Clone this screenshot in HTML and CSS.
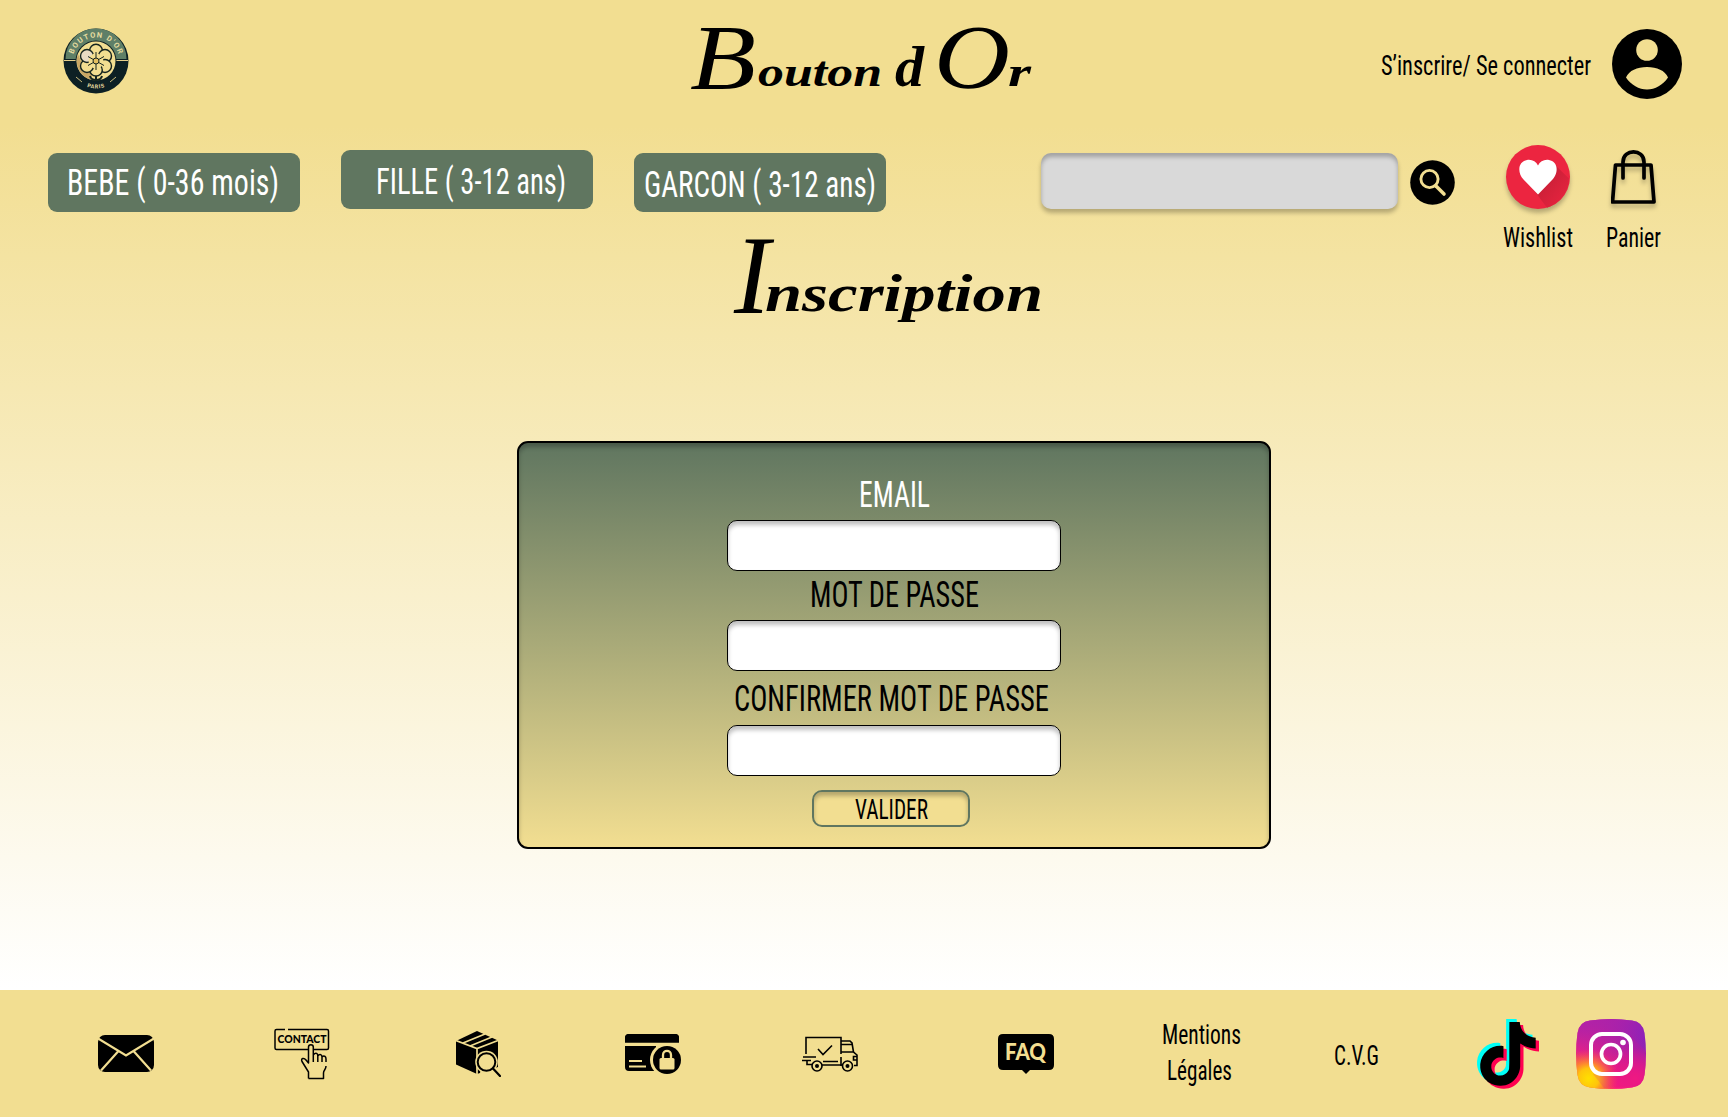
FILE: index.html
```html
<!DOCTYPE html>
<html lang="fr">
<head>
<meta charset="utf-8">
<title>Bouton d'Or - Inscription</title>
<link rel="stylesheet" href="styles.css">
</head>
<body>
<div class="page">
  <header class="top">
    <svg class="logo" width="66" height="66" viewBox="0 0 66 66">
      <defs>
        <path id="arc-top" d="M9.500 33A23.500 23.500 0 0 1 56.500 33"/>
        <path id="arc-bottom" d="M5.500 33A27.500 27.500 0 0 0 60.500 33"/>
      </defs>
      <circle cx="33" cy="33" r="32.500" fill="#0d2024"/>
      <path d="M2.500 31A30.500 30.500 0 0 1 63.500 31Z" fill="#5f7f67"/>
      <path d="M1 32.500H65" stroke="#e6cf8a" stroke-width="1"/>
      <circle cx="33" cy="33" r="20.500" fill="#0d2024"/>
      <circle cx="33" cy="33" r="19.500" fill="#f2de91"/>
      <path d="M15 26A19.500 19.500 0 0 0 27 51.500L30 46L20 38Z" fill="#c9a765"/>
      <g fill="#f2de91" stroke="#15241f" stroke-width="1.400">
        <ellipse cx="33" cy="23" rx="6.500" ry="6.800"/>
        <ellipse cx="42" cy="28" rx="6.500" ry="6.500"/>
        <ellipse cx="42" cy="38" rx="6.500" ry="6.500"/>
        <ellipse cx="33" cy="42" rx="6.300" ry="6"/>
        <ellipse cx="24" cy="38" rx="6.500" ry="6.500"/>
        <ellipse cx="24" cy="28" rx="6.500" ry="6.500" fill="#e9dcc3"/>
      </g>
      <circle cx="33" cy="33" r="7.500" fill="#f2de91"/>
      <path d="M33 24V42M25 28.500L41 37.500M25 37.500L41 28.500" stroke="#15241f" stroke-width="1"/>
      <circle cx="33" cy="33" r="3" fill="#e3bf60" stroke="#15241f"/>
      <path d="M33 48V53M33 52Q28 52 27 48M33 52Q38 52 39 48" fill="none" stroke="#15241f" stroke-width="2"/>
      <path d="M13 49L19 54M53 49L47 54" stroke="#cdbb7b" stroke-width="1"/>
      <text class="logo-text"><textPath href="#arc-top" startOffset="50%" textLength="60" lengthAdjust="spacing">BOUTON D'OR</textPath></text>
      <text class="logo-text small"><textPath href="#arc-bottom" startOffset="50%">PARIS</textPath></text>
    </svg>
    <svg class="brand script" width="345" height="80">
      <text class="cap" x="2" y="69" font-size="94" textLength="66" lengthAdjust="spacingAndGlyphs">B</text>
      <text x="70" y="66" font-size="43" textLength="124" lengthAdjust="spacingAndGlyphs">outon</text>
      <text x="207" y="66" font-size="56" textLength="29" lengthAdjust="spacingAndGlyphs">d</text>
      <text class="cap" x="246" y="68" font-size="91" textLength="76" lengthAdjust="spacingAndGlyphs">O</text>
      <text x="320" y="66" font-size="43" textLength="23" lengthAdjust="spacingAndGlyphs">r</text>
    </svg>
    <a class="account">
      <svg class="label" width="210" height="40"><text x="0" y="29" textLength="210" lengthAdjust="spacingAndGlyphs">S’inscrire/ Se connecter</text></svg>
      <svg width="70" height="70" viewBox="0 0 70 70"><circle cx="35" cy="35" r="35"/><circle class="cutout" cx="35" cy="21" r="10.800"/><path class="cutout" d="M14 48.500C17 41.500 25 38 35 38S53 41.500 56 48.500C51 56 43 60.500 35 60.500S19 56 14 48.500Z"/></svg>
    </a>
  </header>

  <nav class="bar">
    <a class="category"><svg class="label big" width="213" height="58"><text x="-1" y="41.500" textLength="212" lengthAdjust="spacingAndGlyphs">BEBE ( 0-36 mois)</text></svg></a>
    <a class="category raised"><svg class="label big" width="190" height="58"><text x="-1" y="43.500" textLength="190" lengthAdjust="spacingAndGlyphs">FILLE ( 3-12 ans)</text></svg></a>
    <a class="category"><svg class="label big" width="232" height="58"><text x="0" y="43.500" textLength="232" lengthAdjust="spacingAndGlyphs">GARCON ( 3-12 ans)</text></svg></a>
    <input class="search" type="text" aria-label="Recherche">
    <svg class="search-icon" width="45" height="45" viewBox="0 0 45 45"><circle cx="22.500" cy="22.500" r="22.300"/><g fill="none" stroke="#f2de91"><circle cx="19.500" cy="19" r="8.600" stroke-width="2.900"/><path d="M26 26L34 34" stroke-width="3.600" stroke-linecap="round"/></g></svg>
    <a class="shortcut wishlist">
      <svg class="shadowed" width="64" height="64" viewBox="0 0 64 64">
        <defs><linearGradient id="heart-shade" x1="0" y1="0" x2="1" y2="1"><stop offset=".3" stop-color="#c81f37"/><stop offset="1" stop-color="#ec2540"/></linearGradient></defs>
        <circle cx="32" cy="32" r="32" fill="#ec2540"/>
        <path d="M47 18L63 33.500A32 32 0 0 1 41 62.700L27 44Z" fill="url(#heart-shade)"/>
        <path fill="#fff" d="M32 49.500L17.500 34.500C11 27.500 12 16.500 21 15C26 14.200 30 16.500 32 20.500C34 16.500 38 14.200 43 15C52 16.500 53 27.500 46.500 34.500Z"/>
      </svg>
      <svg class="label" width="70" height="34"><text x="0" y="28" textLength="70" lengthAdjust="spacingAndGlyphs">Wishlist</text></svg>
    </a>
    <a class="shortcut cart">
      <svg class="shadowed" width="46" height="64" viewBox="0 0 46 64"><g fill="none" stroke="#000" stroke-width="3.700" stroke-linecap="round" stroke-linejoin="round"><path d="M4.500 20H40L43 57H1.500Z"/><path d="M12 33V17C12 3.500 33 3.500 33 17V33"/></g></svg>
      <svg class="label" width="55" height="34"><text x="0" y="28" textLength="55" lengthAdjust="spacingAndGlyphs">Panier</text></svg>
    </a>
  </nav>

  <main>
    <svg class="title script" width="312" height="122">
      <text class="cap" x="2" y="75" font-size="113" textLength="36" lengthAdjust="spacingAndGlyphs">I</text>
      <text x="33" y="73" font-size="52" textLength="278" lengthAdjust="spacingAndGlyphs">nscription</text>
    </svg>

    <form class="card">
      <label class="field">
        <svg class="label big light" width="71" height="40"><text x="0" y="30" textLength="71" lengthAdjust="spacingAndGlyphs">EMAIL</text></svg>
        <input type="email">
      </label>
      <label class="field second">
        <svg class="label big" width="169" height="40"><text x="0" y="30" textLength="169" lengthAdjust="spacingAndGlyphs">MOT DE PASSE</text></svg>
        <input type="password">
      </label>
      <label class="field third">
        <svg class="label big" width="315" height="40"><text x="0" y="29" textLength="315" lengthAdjust="spacingAndGlyphs">CONFIRMER MOT DE PASSE</text></svg>
        <input type="password">
      </label>
      <button class="submit" type="button"><svg class="label" width="73" height="32"><text x="0" y="26.500" textLength="73" lengthAdjust="spacingAndGlyphs">VALIDER</text></svg></button>
    </form>
  </main>

  <footer class="footer">
    <svg width="56" height="37" viewBox="0 0 56 37"><rect width="56" height="37" rx="7"/><g fill="none" stroke="#f2de91" stroke-width="2.200"><path d="M0 3.500L28 20.500L56 3.500M3 35.500L20.500 16M53 35.500L35.500 16"/></g></svg>
    <svg class="contact" width="56" height="52" viewBox="0 0 56 52">
      <path d="M11 1.500H2.500Q1 1.500 1 3V20Q1 21.500 2.500 21.500H34M40 21.500H53Q54.500 21.500 54.500 20V3Q54.500 1.500 53 1.500H14" fill="none" stroke="#000" stroke-width="1.500"/>
      <text x="3.500" y="15.300" textLength="49" lengthAdjust="spacingAndGlyphs">CONTACT</text>
      <path class="hand" d="M34.500 50.500V44L28 33.500C26.500 30 30 29.500 32 32L34.500 35V19C34.500 16 39.300 16 39.300 19V34M39.300 27C42 23.500 44 26 43.800 28V34M43.800 28C46 25 48 27 48 29V34M48 29C50.500 26.500 52 29 52 31V34M52 38C52 42 49.500 42 49.500 45V50.500H34.500" stroke="#000" stroke-width="1.500" stroke-linejoin="round"/>
    </svg>
    <svg class="box" width="45" height="46" viewBox="0 0 45 46"><path d="M0 10L21 0L42 9.500V36L21 43L0 33.500Z"/><g fill="none" stroke="#f2de91" stroke-width="1.700"><path d="M0 9.500L21 17.500L42 9.500M21 17.500V43M7 12L29 3M14 15L36 6"/></g><circle cx="30.500" cy="31" r="11.300" fill="#f2de91"/><path d="M33 40L45 36V46H23L25 38Z" fill="#f2de91"/><circle cx="30.500" cy="31" r="8.800" fill="none" stroke="#000" stroke-width="2"/><path d="M37 37.500L44 45" stroke="#000" stroke-width="2.200" stroke-linecap="round"/></svg>
    <svg class="payment" width="56" height="40" viewBox="0 0 56 40"><path d="M0 8.500V4Q0 0 4 0H50Q54 0 54 4V8.500ZM0 12H31V37H4Q0 37 0 33Z"/><circle cx="42" cy="26" r="17" fill="#f2de91"/><path d="M0 8.500V4Q0 0 4 0H50Q54 0 54 4V8.500Z"/><path d="M4 27H17M4 32.500H21" stroke="#f2de91" stroke-width="2"/><circle cx="42" cy="26" r="14"/><rect x="34.500" y="24" width="15" height="11.500" rx="1.500" fill="#f2de91"/><path d="M38 25V21C38 15.500 46 15.500 46 21V25" fill="none" stroke="#f2de91" stroke-width="2.300"/></svg>
    <svg class="truck" width="57" height="36" viewBox="0 0 57 36"><g fill="none" stroke="#000" stroke-width="1.600"><path d="M5 18V1.500H40V18M40 21V30M40 5H49L51 7L52.500 16L56 19V29.500H53M40 8.500H50.500M40 16H52.500M2 21H15M1 24.500H10M6 24.500V28.500H11M21 29H42M22 25.500H37M56 20.500H52.500V24H56"/><circle cx="16" cy="30" r="5"/><circle cx="46.500" cy="30" r="5"/><path d="M17 13L22 18.500L31 9.500"/></g><circle cx="16" cy="30" r="2"/><circle cx="46.500" cy="30" r="2"/></svg>
    <svg class="faq" width="56" height="40" viewBox="0 0 56 40"><path d="M5 0H51Q56 0 56 5V31Q56 36 51 36H32L28 40L24 36H5Q0 36 0 31V5Q0 0 5 0Z"/><text x="7" y="26" textLength="41" lengthAdjust="spacingAndGlyphs">FAQ</text></svg>
    <svg class="label legal" width="80" height="74"><text x="0" y="26.500" textLength="79" lengthAdjust="spacingAndGlyphs">Mentions</text><text x="5" y="62.500" textLength="65" lengthAdjust="spacingAndGlyphs">Légales</text></svg>
    <svg class="label cvg" width="46" height="40"><text x="0" y="30.500" textLength="45" lengthAdjust="spacingAndGlyphs">C.V.G</text></svg>
    <svg class="tiktok" width="62" height="70" viewBox="0 0 62 70">
      <defs><path id="note" transform="scale(2.660) translate(-1.560 0)" d="M12.525.02c1.310-.020 2.610-.010 3.910-.020.080 1.530.630 3.090 1.750 4.170 1.120 1.110 2.700 1.620 4.240 1.790v4.030c-1.440-.050-2.890-.350-4.200-.970-.570-.260-1.100-.590-1.620-.930-.010 2.920.010 5.840-.020 8.750-.080 1.400-.540 2.790-1.350 3.940-1.310 1.920-3.580 3.170-5.910 3.210-1.430.080-2.860-.310-4.080-1.030-2.020-1.190-3.440-3.370-3.650-5.710-.020-.500-.030-1-.010-1.490.180-1.900 1.120-3.720 2.580-4.960 1.660-1.440 3.980-2.130 6.150-1.720.020 1.480-.040 2.960-.040 4.440-.990-.320-2.150-.230-3.020.370-.630.410-1.110 1.040-1.360 1.750-.210.510-.150 1.070-.140 1.610.240 1.640 1.820 3.020 3.500 2.870 1.120-.010 2.190-.660 2.770-1.610.190-.330.400-.670.410-1.060.100-1.790.060-3.570.070-5.360.010-4.030-.010-8.050.020-12.070z"/></defs>
      <use href="#note" fill="#00fff7"/><use href="#note" x="6.500" y="6" fill="#ff0050"/><use href="#note" x="3.200" y="3"/>
    </svg>
    <svg class="instagram" width="70" height="70" viewBox="0 0 70 70">
      <defs>
        <linearGradient id="ig-base" x1="0" y1="1" x2="1" y2="0"><stop offset="0" stop-color="#ff8a1c"/><stop offset=".3" stop-color="#f9207b"/><stop offset=".62" stop-color="#b521a0"/><stop offset="1" stop-color="#6320cf"/></linearGradient>
        <linearGradient id="ig-top" x1=".2" y1="0" x2=".35" y2=".6"><stop offset="0" stop-color="#b022a8"/><stop offset="1" stop-color="#b022a8" stop-opacity="0"/></linearGradient>
        <radialGradient id="ig-glow" cx=".18" cy=".85" r=".42"><stop offset="0" stop-color="#ffe000"/><stop offset=".35" stop-color="#ffc40c"/><stop offset="1" stop-color="#ff5a3c" stop-opacity="0"/></radialGradient>
        <radialGradient id="ig-pink" cx=".85" cy=".85" r=".45"><stop offset="0" stop-color="#f51c80"/><stop offset="1" stop-color="#ff1478" stop-opacity="0"/></radialGradient>
        <path id="ig-shape" d="M14 1.500Q35-1.500 56 1.500Q67 3 68.500 14Q71.500 35 68.500 56Q67 67 56 68.500Q35 71.500 14 68.500Q3 67 1.500 56Q-1.500 35 1.500 14Q3 3 14 1.500Z"/>
      </defs>
      <use href="#ig-shape" fill="url(#ig-base)"/><use href="#ig-shape" fill="url(#ig-top)"/><use href="#ig-shape" fill="url(#ig-pink)"/><use href="#ig-shape" fill="url(#ig-glow)"/>
      <path d="M54 16L69.500 32V45Q69 62 62 67L28 69L17 55L40 50Z" fill="#d01090" opacity=".18"/>
      <g fill="none" stroke="#fff"><rect x="15" y="15" width="40" height="40" rx="11" stroke-width="4"/><circle cx="35" cy="35" r="9.500" stroke-width="3.700"/></g><circle cx="47" cy="23.500" r="2.800" fill="#fff"/>
    </svg>
  </footer>
</div>
</body>
</html>
```
FILE: styles.css
```css
* { box-sizing: border-box; }

body {
  margin: 0;
  font-family: Roboto, "Liberation Sans", sans-serif;
  color: #000;
}

svg { display: block; flex: none; }

.page {
  width: 1728px;
  height: 1117px;
  display: flex;
  flex-direction: column;
  overflow: hidden;
  background: linear-gradient(#f2de91 125px, #fff 990px);
}

/* Condensed interface lettering */
.label {
  overflow: visible;
  font-family: Roboto, "Liberation Sans", sans-serif;
  font-size: 27.4px;
  font-weight: 400;
  font-stretch: 75%;
}
.label.big { font-size: 36.5px; }
.label.light { fill: #fff; }

/* Calligraphic headings */
.script {
  overflow: visible;
  font-family: "Liberation Serif", serif;
  font-style: italic;
  font-weight: 700;
}
.script .cap { font-weight: 400; }

.cutout { fill: #f2de91; }

.top { display: flex; align-items: flex-start; height: 125px; padding-left: 63px; }
.logo { margin-top: 28px; }
.logo-text {
  fill: #e6dca0;
  font-size: 7.5px;
  font-weight: 700;
  text-anchor: middle;
}
.logo-text.small { font-size: 5.5px; letter-spacing: .6px; }
.brand { margin: 20px 0 0 559px; }
.account { display: flex; align-items: center; gap: 21px; margin: 29px 0 0 348px; }
.account .label { margin-top: 3px; }

.bar { display: flex; align-items: flex-start; padding: 20px 0 0 48px; height: 127px; }
.category {
  display: flex;
  justify-content: center;
  width: 252px;
  height: 59px;
  margin: 8px 41px 0 0;
  border-radius: 9px;
  background: #607660;
  fill: #fff;
}
.category.raised { margin-top: 5px; padding-left: 9px; }
.search {
  width: 357px;
  height: 56px;
  margin: 8px 12px 0 114px;
  padding: 0 12px;
  border: 0;
  border-radius: 10px;
  background: #d9d9d9;
  box-shadow: 0 4px 4px rgba(0, 0, 0, .25), inset 0 4px 4px rgba(0, 0, 0, .25);
}
.search-icon { margin-top: 15px; }
.shortcut { display: flex; flex-direction: column; align-items: center; gap: 10px; }
.wishlist { margin-left: 48px; }
.cart { margin-left: 33px; }
.shadowed { filter: drop-shadow(0 4px 2px rgba(0, 0, 0, .25)); }

.title { margin: -14px 0 0 732px; }

.card {
  display: flex;
  flex-direction: column;
  align-items: center;
  width: 754px;
  height: 408px;
  margin: 81px 0 0 517px;
  padding-top: 34px;
  border: 2px solid #000;
  border-radius: 11px;
  background: linear-gradient(#607660, #f2de91);
  box-shadow: inset 0 4px 4px rgba(0, 0, 0, .25);
}
.field { display: flex; flex-direction: column; align-items: center; gap: 3px; }
.field.second { margin-top: 6px; }
.field.third { margin-top: 11px; }
.field.third .label { margin-right: 6px; }
.field input {
  width: 334px;
  height: 51px;
  padding: 0 12px;
  border: 1px solid #000;
  border-radius: 10px;
  background: #fff;
  box-shadow: inset 0 4px 4px rgba(0, 0, 0, .25);
}
.submit {
  display: flex;
  justify-content: center;
  width: 158px;
  height: 37px;
  margin: 14px 6px 0 0;
  padding: 0;
  border: 2px solid #607660;
  border-radius: 10px;
  background: #f2de91;
  box-shadow: inset 0 4px 4px rgba(0, 0, 0, .25);
}

.footer {
  display: flex;
  align-items: center;
  height: 127px;
  margin-top: auto;
  padding-left: 98px;
  background: #f2de91;
}
.contact { margin-left: 120px; font: 900 10.500px Lato, sans-serif; }
.contact .hand { fill: #f2de91; }
.box { margin-left: 126px; }
.payment { margin-left: 124px; }
.truck { margin-left: 120px; }
.faq { margin-left: 140px; font: 900 22px Lato, sans-serif; }
.faq text { fill: #f2de91; }
.legal { margin-left: 108px; }
.cvg { margin-left: 92px; }
.tiktok { margin-left: 97px; }
.instagram { margin-left: 37px; }
```
